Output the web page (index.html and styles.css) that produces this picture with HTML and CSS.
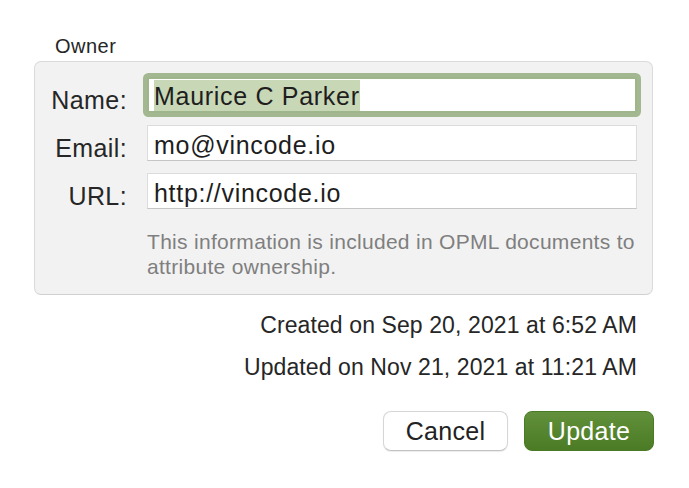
FILE: index.html
```html
<!DOCTYPE html>
<html>
<head>
<meta charset="utf-8">
<link rel="stylesheet" href="styles.css">
</head>
<body>
<div class="dialog">
  <div class="section-title">Owner</div>
  <div class="box">
    <div class="label">Name:</div>
    <div class="field focused"><span class="sel">Maurice C Parker</span></div>
    <div class="label">Email:</div>
    <div class="field">mo@vincode.io</div>
    <div class="label">URL:</div>
    <div class="field">http://vincode.io</div>
    <div class="help">This information is included in OPML documents to attribute ownership.</div>
  </div>
  <div class="dates">
    <div class="date">Created on Sep 20, 2021 at 6:52 AM</div>
    <div class="date">Updated on Nov 21, 2021 at 11:21 AM</div>
  </div>
  <div class="buttons">
    <button class="btn cancel">Cancel</button>
    <button class="btn primary">Update</button>
  </div>
</div>
</body>
</html>
```

FILE: styles.css
```css
html, body {
  margin: 0;
  padding: 0;
  background: #ffffff;
}
body {
  font-family: "Liberation Sans", Arial, sans-serif;
  color: #262626;
  width: 689px;
  height: 488px;
  overflow: hidden;
}
.dialog {
  padding-top: 34px;
  display: flex;
  flex-direction: column;
}
.section-title {
  font-size: 20px;
  letter-spacing: 0.5px;
  line-height: 24px;
  padding-left: 55px;
  margin-bottom: 3px;
  color: #262626;
}
.box {
  margin-left: 34px;
  width: 602px;
  background: #f2f2f2;
  border: 1px solid #dadada;
  border-bottom-color: #d0d0d0;
  border-radius: 7px;
  padding: 15px 15px 15px 0;
  display: grid;
  grid-template-columns: 92px 490px;
  column-gap: 20px;
  row-gap: 12px;
  align-items: start;
}
.label {
  font-size: 25px;
  letter-spacing: 0.4px;
  line-height: 36px;
  padding-top: 5px;
  height: 31px;
  text-align: right;
  color: #262626;
}
.field {
  height: 36px;
  box-sizing: border-box;
  background: #ffffff;
  border: 1px solid #dcdcdc;
  border-bottom-color: #c6c6c6;
  font-size: 25px;
  letter-spacing: 0.7px;
  line-height: 36px;
  padding-left: 6px;
  padding-top: 1px;
  color: #1e1e1e;
  white-space: nowrap;
}
.field.focused {
  border: 2px solid #9fb58c;
  box-shadow: 0 0 0 4px #a3b890;
  border-radius: 2px;
  padding-left: 5px;
  padding-top: 1px;
  line-height: 30px;
}
.sel {
  display: inline-block;
  background: #c8d7b6;
  line-height: 30px;
  height: 30px;
  padding-top: 1px;
}
.help {
  grid-column: 2;
  margin-top: 8px;
  font-size: 21px;
  letter-spacing: 0.3px;
  line-height: 25px;
  color: #7f7f7f;
}
.dates {
  margin-top: 16px;
  width: 637px;
  display: flex;
  flex-direction: column;
  align-items: flex-end;
  gap: 14px;
}
.date {
  font-size: 23px;
  letter-spacing: 0.1px;
  line-height: 28px;
  color: #262626;
}
.buttons {
  margin-top: 30px;
  width: 654px;
  display: flex;
  justify-content: flex-end;
  gap: 16px;
}
.btn {
  font-family: "Liberation Sans", Arial, sans-serif;
  font-size: 25px;
  letter-spacing: 0.3px;
  height: 40px;
  border-radius: 8px;
  padding: 0;
  line-height: 38px;
  box-sizing: border-box;
}
.cancel {
  width: 125px;
  background: #ffffff;
  color: #222222;
  border: 1px solid #d6d6d6;
  border-bottom-color: #c2c2c2;
  box-shadow: 0 1px 1px rgba(0,0,0,0.08);
}
.primary {
  width: 130px;
  color: #ffffff;
  border: 1px solid #4a7a23;
  background: linear-gradient(#62903c, #4b7b24);
}
```
